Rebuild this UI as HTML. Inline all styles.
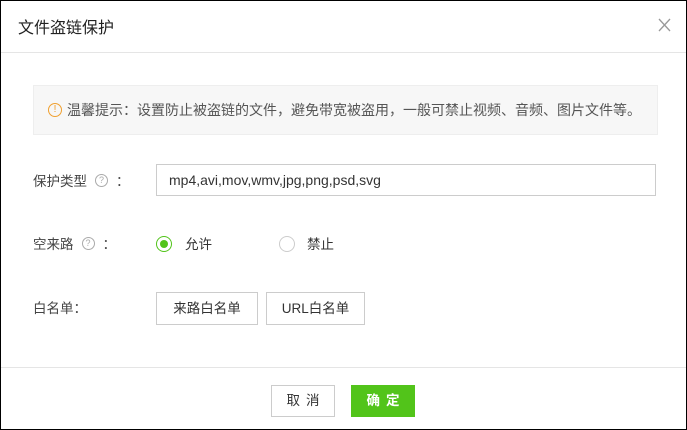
<!DOCTYPE html>
<html><head><meta charset="utf-8"><style>
*{box-sizing:border-box;margin:0;padding:0}
body{width:687px;height:430px;background:#fff;font-family:"Liberation Sans","Noto Sans CJK SC",sans-serif;color:#333;position:relative;overflow:hidden}
.frame{position:absolute;left:0;top:0;width:687px;height:430px;border:1px solid #000;pointer-events:none}
.a{position:absolute}
.title{left:18px;top:14px;font-size:16px;color:#222}
.hl{left:0;top:52px;width:687px;height:1px;background:#e5e5e5}
.notice{left:33px;top:85px;width:625px;height:50px;background:#f7f7f7;border:1px solid #eee;font-size:14px;color:#555;padding-left:14px;display:flex;align-items:center}
.warn{display:inline-block;width:14px;height:14px;border:1.3px solid #f0a030;border-radius:50%;color:#f0a030;font-size:10px;line-height:12px;text-align:center;margin-right:5px;flex:none}
.lab{font-size:13.5px;color:#444;left:33px;display:flex;align-items:center;height:20px}
.q{display:inline-block;width:13px;height:13px;border:1px solid #aaa;border-radius:50%;color:#aaa;font-size:9px;line-height:11px;text-align:center;margin:0 8px 0 8px}
.input{left:156px;top:164px;width:500px;height:32px;border:1px solid #ccc;font-size:14px;line-height:30px;padding-left:12px;color:#333}
.radio{width:16px;height:16px;border-radius:50%;border:1px solid #ccc}
.btn{border:1px solid #ccc;font-size:13.5px;text-align:center;background:#fff;color:#333}
</style></head><body>
<div class="a title">文件盗链保护</div>
<svg class="a" style="left:658px;top:18px" width="13" height="14" viewBox="0 0 13 14"><path d="M1 1L12 13M12 1L1 13" stroke="#999" stroke-width="1.3" fill="none"/></svg>
<div class="a hl"></div>
<div class="a notice"><span class="warn">!</span>温馨提示：设置防止被盗链的文件，避免带宽被盗用，一般可禁止视频、音频、图片文件等。</div>
<div class="a lab" style="top:170px">保护类型<span class="q">?</span>：</div>
<div class="a input">mp4,avi,mov,wmv,jpg,png,psd,svg</div>
<div class="a lab" style="top:233px">空来路<span class="q">?</span>：</div>
<div class="a radio" style="left:156px;top:236px;border-color:#52c41a"><div style="width:8px;height:8px;border-radius:50%;background:#52c41a;margin:3px"></div></div>
<div class="a" style="left:185px;top:233px;font-size:13.5px">允许</div>
<div class="a radio" style="left:279px;top:236px"></div>
<div class="a" style="left:307px;top:233px;font-size:13.5px">禁止</div>
<div class="a lab" style="top:297px">白名单：</div>
<div class="a btn" style="left:156px;top:292px;width:102px;height:33px;line-height:31px">来路白名单</div>
<div class="a btn" style="left:266px;top:292px;width:99px;height:33px;line-height:31px">URL白名单</div>
<div class="a hl" style="top:367px"></div>
<div class="a btn" style="left:271px;top:385px;width:64px;height:32px;line-height:30px;letter-spacing:6px;padding-left:6px">取消</div>
<div class="a btn" style="left:351px;top:385px;width:64px;height:32px;line-height:32px;background:#52c41a;border:none;color:#fff;font-weight:bold;letter-spacing:6px;padding-left:6px">确定</div>
<div class="frame"></div>
</body></html>
